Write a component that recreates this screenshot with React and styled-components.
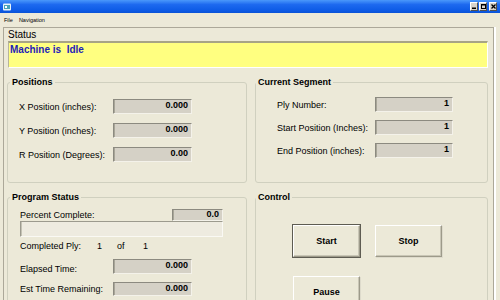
import React from 'react'
import styled, { createGlobalStyle } from 'styled-components'

const GlobalStyle = createGlobalStyle`
  html, body {
    margin: 0;
    padding: 0;
    background: #ECE9D8;
  }
  body {
    font-family: "Liberation Sans", Arial, sans-serif;
    color: #000;
  }
`

const Window = styled.div`
  width: 500px;
  height: 300px;
  overflow: hidden;
  background: #ECE9D8;
  display: flex;
  flex-direction: column;
`

const TitleBar = styled.div`
  flex: none;
  height: 13px;
  background: linear-gradient(#4A98FB, #1D69EF 35%, #0D5BE6 80%, #0A53D6);
  display: flex;
  align-items: center;
  justify-content: space-between;
  padding: 0 3px 0 2px;
`

const WinButtons = styled.div`
  display: flex;
  gap: 1px;
  & > :last-child {
    margin-left: 1px;
  }
`

const WinButton = styled.div`
  width: 6px;
  height: 7px;
  background: #D8D4CC;
  border: 1px solid;
  border-color: #fff #505050 #505050 #fff;
  display: flex;
  align-items: center;
  justify-content: center;
  svg {
    display: block;
  }
`

const MenuBar = styled.div`
  flex: none;
  height: 14px;
  display: flex;
  align-items: center;
  gap: 6px;
  padding-left: 4px;
  font-size: 5.5px;
`

const Client = styled.div`
  flex: 1;
  margin: 0 6px 0 3px;
  border-top: 1px solid #ACA899;
  border-left: 1px solid #ACA899;
  border-right: 1px solid #ACA899;
  box-shadow: 2px 0 0 #fff;
  padding: 0 0 0 3px;
`

const StatusLabel = styled.div`
  height: 13px;
  line-height: 13px;
  font-size: 10px;
  padding-left: 1px;
`

const StatusBox = styled.div`
  box-sizing: border-box;
  width: 480px;
  height: 27px;
  margin-left: 1px;
  background: #FFFF80;
  border-top: 2px solid #A7A486;
  border-left: 1px solid #B8B59A;
  border-right: 1px solid #fff;
  border-bottom: 1px solid #fff;
  padding: 1px 1px;
  font-size: 10px;
  font-weight: bold;
  color: #1E22B8;
  white-space: pre;
`

const Groups = styled.div`
  display: grid;
  grid-template-columns: 240px 233px;
  grid-template-rows: 106px auto;
  column-gap: 8px;
  row-gap: 9px;
  margin-top: 9px;
`

const Group = styled.fieldset`
  margin: 0;
  padding: ${p => p.$top}px 0 0 0;
  border: 1px solid #D0D0BF;
  border-radius: 3px;
  min-width: 0;
  box-sizing: border-box;
`

const Legend = styled.legend`
  margin-left: ${p => p.$indent}px;
  padding: 0 2px;
  font-size: 9px;
  font-weight: bold;
  line-height: 11px;
`

const GroupBody = styled.div`
  padding-left: ${p => p.$indent}px;
`

const FieldGrid = styled.div`
  display: grid;
  grid-template-columns: ${p => p.$label}px ${p => p.$box}px;
  row-gap: ${p => p.$gap}px;
  align-items: center;
`

const Label = styled.div`
  font-size: 9px;
  white-space: nowrap;
`

const ValueBox = styled.div`
  box-sizing: border-box;
  height: ${p => p.$h || 15}px;
  background: #D5D1C6;
  border: 1px solid;
  border-color: #8C8A80 #F4F2EA #F4F2EA #8C8A80;
  box-shadow: inset 1px 0 0 #A8A698;
  padding: 0 3px;
  font-size: 9px;
  font-weight: bold;
  text-align: right;
  line-height: ${p => (p.$h || 15) - 4}px;
`

const ProgramBody = styled.div`
  padding-left: 12px;
  width: 203px;
`

const PercentRow = styled.div`
  display: flex;
  justify-content: space-between;
  align-items: center;
  height: 12px;
`

const ProgressTrack = styled.div`
  box-sizing: border-box;
  height: 16px;
  background: #EEEBE0;
  border: 1px solid;
  border-color: #9C9A8E #FAF9F4 #FAF9F4 #9C9A8E;
  box-shadow: inset 1px 0 0 #C4C2B4;
`

const PlyRow = styled.div`
  display: flex;
  height: 12px;
  line-height: 12px;
  margin: 3px 0 7px;
  font-size: 9px;
`

const PlyCell = styled.span`
  width: ${p => p.$w}px;
  flex: none;
`

const TimeRow = styled.div`
  display: grid;
  grid-template-columns: 93px 79px;
  align-items: ${p => p.$align};
  margin-bottom: ${p => p.$mb || 0}px;
`

const ButtonGrid = styled.div`
  display: grid;
  grid-template-columns: 67px 67px;
  column-gap: 15px;
  row-gap: 19px;
`

const PushButton = styled.button`
  box-sizing: border-box;
  height: 32px;
  margin: 0;
  padding: 0;
  background: #ECE9D8;
  font-family: "Liberation Sans", Arial, sans-serif;
  font-size: 9px;
  font-weight: bold;
  color: #000;
  border: 1px solid;
  border-color: #FFFFFF #9D9A8A #9D9A8A #FFFFFF;
  box-shadow: ${p => (p.$default
    ? '0 0 0 1px #5E5C52, inset -1px -1px 0 #C9C6B6'
    : 'inset -1px -1px 0 #C9C6B6, 1px 1px 0 #DEDBCC')};
`

function AppIcon() {
  return (
    <svg width="10" height="10" viewBox="0 0 10 10">
      <rect x="1" y="1.5" width="8" height="7" rx="1" fill="#E8F4F8" />
      <rect x="2" y="3" width="6" height="4" fill="#4AA3B8" />
      <rect x="3" y="4" width="2" height="2" fill="#fff" />
    </svg>
  )
}

function App() {
  return (
    <>
      <GlobalStyle />
      <Window>
        <TitleBar>
          <AppIcon />
          <WinButtons>
            <WinButton>
              <svg width="4" height="5"><rect x="0" y="3.5" width="4" height="1.5" fill="#000" /></svg>
            </WinButton>
            <WinButton>
              <svg width="5" height="5"><rect x="0.5" y="0.5" width="4" height="4" fill="none" stroke="#000" /><rect x="0" y="0" width="5" height="1.5" fill="#000" /></svg>
            </WinButton>
            <WinButton>
              <svg width="5" height="5"><path d="M0.5 0.5 L4.5 4.5 M4.5 0.5 L0.5 4.5" stroke="#000" strokeWidth="1.3" /></svg>
            </WinButton>
          </WinButtons>
        </TitleBar>
        <MenuBar>
          <span>File</span>
          <span>Navigation</span>
        </MenuBar>
        <Client>
          <StatusLabel>Status</StatusLabel>
          <StatusBox>Machine is  Idle</StatusBox>
          <Groups>
            <Group $top={11}>
              <Legend $indent={2}>Positions</Legend>
              <GroupBody $indent={11}>
                <FieldGrid $label={94} $box={79} $gap={9}>
                  <Label>X Position (inches):</Label>
                  <ValueBox>0.000</ValueBox>
                  <Label>Y Position (inches):</Label>
                  <ValueBox>0.000</ValueBox>
                  <Label>R Position (Degrees):</Label>
                  <ValueBox>0.00</ValueBox>
                </FieldGrid>
              </GroupBody>
            </Group>
            <Group $top={9}>
              <Legend $indent={0}>Current Segment</Legend>
              <GroupBody $indent={21}>
                <FieldGrid $label={98} $box={78} $gap={8}>
                  <Label>Ply Number:</Label>
                  <ValueBox>1</ValueBox>
                  <Label>Start Position (Inches):</Label>
                  <ValueBox>1</ValueBox>
                  <Label>End Position (inches):</Label>
                  <ValueBox>1</ValueBox>
                </FieldGrid>
              </GroupBody>
            </Group>
            <Group $top={6}>
              <Legend $indent={2}>Program Status</Legend>
              <ProgramBody>
                <PercentRow>
                  <Label>Percent Complete:</Label>
                  <ValueBox $h={12} style={{ width: 51 }}>0.0</ValueBox>
                </PercentRow>
                <ProgressTrack />
                <PlyRow>
                  <PlyCell $w={77}>Completed Ply:</PlyCell>
                  <PlyCell $w={20}>1</PlyCell>
                  <PlyCell $w={26}>of</PlyCell>
                  <PlyCell $w={10}>1</PlyCell>
                </PlyRow>
                <TimeRow $align="end" $mb={8}>
                  <Label>Elapsed Time:</Label>
                  <ValueBox>0.000</ValueBox>
                </TimeRow>
                <TimeRow $align="center">
                  <Label>Est Time Remaining:</Label>
                  <ValueBox $h={14}>0.000</ValueBox>
                </TimeRow>
              </ProgramBody>
            </Group>
            <Group $top={22}>
              <Legend $indent={0}>Control</Legend>
              <GroupBody $indent={37}>
                <ButtonGrid>
                  <PushButton $default>Start</PushButton>
                  <PushButton>Stop</PushButton>
                  <PushButton>Pause</PushButton>
                </ButtonGrid>
              </GroupBody>
            </Group>
          </Groups>
        </Client>
      </Window>
    </>
  )
}

export default App
